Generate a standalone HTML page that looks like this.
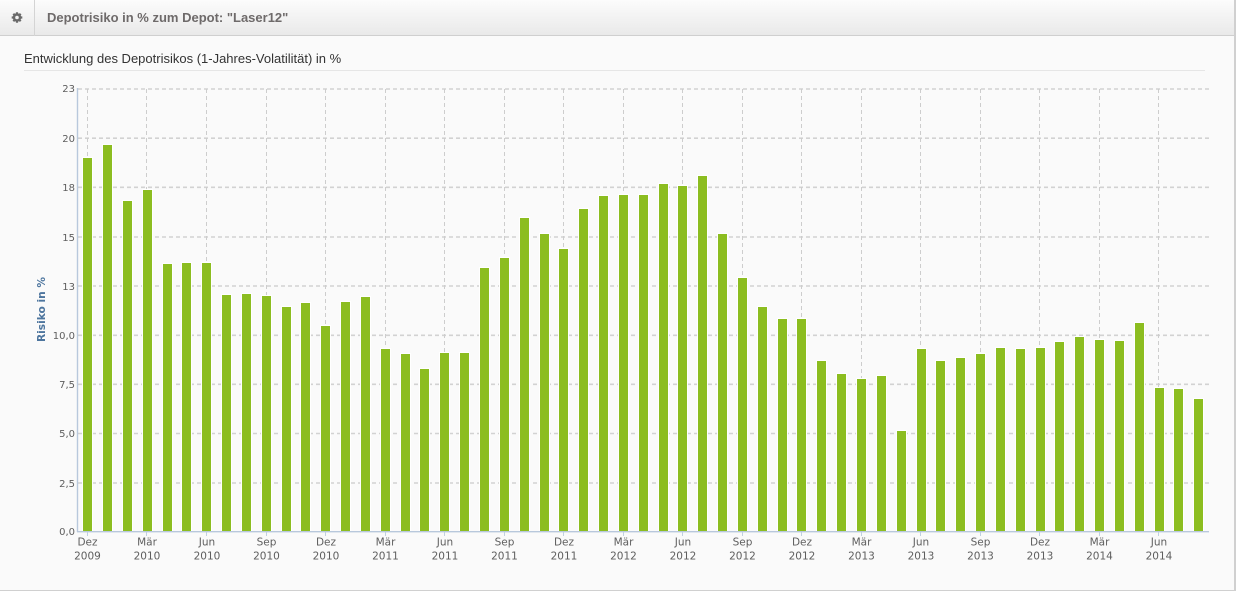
<!DOCTYPE html>
<html lang="de">
<head>
<meta charset="utf-8">
<title>Depotrisiko</title>
<style>
html,body{margin:0;padding:0;background:#fafafa;}
#p{position:relative;width:1236px;height:591px;overflow:hidden;background:#fafafa;font-family:"Liberation Sans",sans-serif;}
#h{position:absolute;left:0;top:0;width:1234px;height:35px;background:linear-gradient(#fcfcfc,#e9e9e9);border-bottom:1px solid #cfcfcf;}
#s{position:absolute;left:34px;top:0;width:1px;height:36px;background:#d4d4d4;}
#t{position:absolute;left:47px;top:10px;font-size:13px;line-height:15px;font-weight:bold;color:#6e6a6a;white-space:nowrap;}
#st{position:absolute;left:24px;top:50px;font-size:13px;line-height:17px;color:#333;white-space:nowrap;}
#l{position:absolute;left:24px;top:70px;width:1181px;height:1px;background:#e6e6e6;}
#r{position:absolute;left:1234px;top:0;width:2px;height:591px;background:#d0d0d0;}
#b{position:absolute;left:0;top:590px;width:1236px;height:1px;background:#d0d0d0;}
svg{position:absolute;left:0;top:0;}
.y{font:10px "DejaVu Sans",sans-serif;fill:#5e5e5e;text-anchor:end;}
.x{font:10.5px "DejaVu Sans",sans-serif;fill:#5e5e5e;text-anchor:middle;}
</style>
</head>
<body>
<div id="p">
<div id="h"></div>
<div id="s"></div>
<div id="t">Depotrisiko in % zum Depot: "Laser12"</div>
<div id="st">Entwicklung des Depotrisikos (1-Jahres-Volatilität) in %</div>
<div id="l"></div>
<div id="r"></div>
<div id="b"></div>
<svg width="1236" height="591" viewBox="0 0 1236 591">
<g fill="none" stroke="#6a6a6a">
<circle cx="17" cy="17.5" r="3" stroke-width="2.4"/>
<path d="M17 12.2v2M17 20.8v2M11.7 17.5h2M20.3 17.5h2M13.3 13.8l1.4 1.4M19.3 19.8l1.4 1.4M13.3 21.2l1.4-1.4M19.3 15.2l1.4-1.4" stroke-width="2.2"/>
</g>
<g fill="none" stroke="#d2d2d2" stroke-width="1.6" stroke-dasharray="4 3">
<path d="M78 89H1209M78 138.2H1209M78 187.3H1209M78 237H1209M78 286H1209M78 335.3H1209M78 384.3H1209M78 433.5H1209M78 483H1209"/>
</g>
<g fill="none" stroke="#cdcdcd" stroke-width="1" stroke-dasharray="4 3">
<path d="M87.5 89V531M146.5 89V531M206.5 89V531M266.5 89V531M325.5 89V531M385.5 89V531M444.5 89V531M504.5 89V531M563.5 89V531M623.5 89V531M682.5 89V531M742.5 89V531M801.5 89V531M861.5 89V531M920.5 89V531M980.5 89V531M1039.5 89V531M1099.5 89V531M1158.5 89V531"/>
</g>
<path fill="#8cbd20" stroke="#fff" stroke-width="2" paint-order="stroke" d="M83 158h9V531h-9zM103 145h9V531h-9zM123 201h9V531h-9zM143 190h9V531h-9zM163 264h9V531h-9zM182 263h9V531h-9zM202 263h9V531h-9zM222 295h9V531h-9zM242 294h9V531h-9zM262 296h9V531h-9zM282 307h9V531h-9zM301 303h9V531h-9zM321 326h9V531h-9zM341 302h9V531h-9zM361 297h9V531h-9zM381 349h9V531h-9zM401 354h9V531h-9zM420 369h9V531h-9zM440 353h9V531h-9zM460 353h9V531h-9zM480 268h9V531h-9zM500 258h9V531h-9zM520 218h9V531h-9zM540 234h9V531h-9zM559 249h9V531h-9zM579 209h9V531h-9zM599 196h9V531h-9zM619 195h9V531h-9zM639 195h9V531h-9zM659 184h9V531h-9zM678 186h9V531h-9zM698 176h9V531h-9zM718 234h9V531h-9zM738 278h9V531h-9zM758 307h9V531h-9zM778 319h9V531h-9zM797 319h9V531h-9zM817 361h9V531h-9zM837 374h9V531h-9zM857 379h9V531h-9zM877 376h9V531h-9zM897 431h9V531h-9zM917 349h9V531h-9zM936 361h9V531h-9zM956 358h9V531h-9zM976 354h9V531h-9zM996 348h9V531h-9zM1016 349h9V531h-9zM1036 348h9V531h-9zM1055 342h9V531h-9zM1075 337h9V531h-9zM1095 340h9V531h-9zM1115 341h9V531h-9zM1135 323h9V531h-9zM1155 388h9V531h-9zM1174 389h9V531h-9zM1194 399h9V531h-9z"/>
<path stroke="#b8c8dc" fill="none" stroke-width="1.4" d="M77.5 88V532M77 531.7H1209"/>
<path stroke="#c0d0e0" fill="none" d="M87.5 532v4M146.5 532v4M206.5 532v4M266.5 532v4M325.5 532v4M385.5 532v4M444.5 532v4M504.5 532v4M563.5 532v4M623.5 532v4M682.5 532v4M742.5 532v4M801.5 532v4M861.5 532v4M920.5 532v4M980.5 532v4M1039.5 532v4M1099.5 532v4M1158.5 532v4"/>
<text class="y" x="75" y="92">23</text>
<text class="y" x="75" y="142">20</text>
<text class="y" x="75" y="191">18</text>
<text class="y" x="75" y="241">15</text>
<text class="y" x="75" y="290">13</text>
<text class="y" x="75" y="339">10,0</text>
<text class="y" x="75" y="388">7,5</text>
<text class="y" x="75" y="437">5,0</text>
<text class="y" x="75" y="487">2,5</text>
<text class="y" x="75" y="535">0,0</text>
<text transform="translate(45 342) rotate(-90)" font-family="'DejaVu Sans',sans-serif" font-size="11" font-weight="bold" fill="#4d759e" textLength="65" lengthAdjust="spacingAndGlyphs">Risiko in %</text>
<g>
<text class="x" x="87.5" y="545.5">Dez</text><text class="x" x="87.5" y="559.5">2009</text>
<text class="x" x="147" y="545.5">Mär</text><text class="x" x="147" y="559.5">2010</text>
<text class="x" x="207" y="545.5">Jun</text><text class="x" x="207" y="559.5">2010</text>
<text class="x" x="266.5" y="545.5">Sep</text><text class="x" x="266.5" y="559.5">2010</text>
<text class="x" x="326" y="545.5">Dez</text><text class="x" x="326" y="559.5">2010</text>
<text class="x" x="385.5" y="545.5">Mär</text><text class="x" x="385.5" y="559.5">2011</text>
<text class="x" x="445" y="545.5">Jun</text><text class="x" x="445" y="559.5">2011</text>
<text class="x" x="504.5" y="545.5">Sep</text><text class="x" x="504.5" y="559.5">2011</text>
<text class="x" x="564" y="545.5">Dez</text><text class="x" x="564" y="559.5">2011</text>
<text class="x" x="623.5" y="545.5">Mär</text><text class="x" x="623.5" y="559.5">2012</text>
<text class="x" x="683" y="545.5">Jun</text><text class="x" x="683" y="559.5">2012</text>
<text class="x" x="742.5" y="545.5">Sep</text><text class="x" x="742.5" y="559.5">2012</text>
<text class="x" x="802" y="545.5">Dez</text><text class="x" x="802" y="559.5">2012</text>
<text class="x" x="861.5" y="545.5">Mär</text><text class="x" x="861.5" y="559.5">2013</text>
<text class="x" x="921" y="545.5">Jun</text><text class="x" x="921" y="559.5">2013</text>
<text class="x" x="980.5" y="545.5">Sep</text><text class="x" x="980.5" y="559.5">2013</text>
<text class="x" x="1040" y="545.5">Dez</text><text class="x" x="1040" y="559.5">2013</text>
<text class="x" x="1099.5" y="545.5">Mär</text><text class="x" x="1099.5" y="559.5">2014</text>
<text class="x" x="1159" y="545.5">Jun</text><text class="x" x="1159" y="559.5">2014</text>
</g>
</svg>
</div>
</body>
</html>
